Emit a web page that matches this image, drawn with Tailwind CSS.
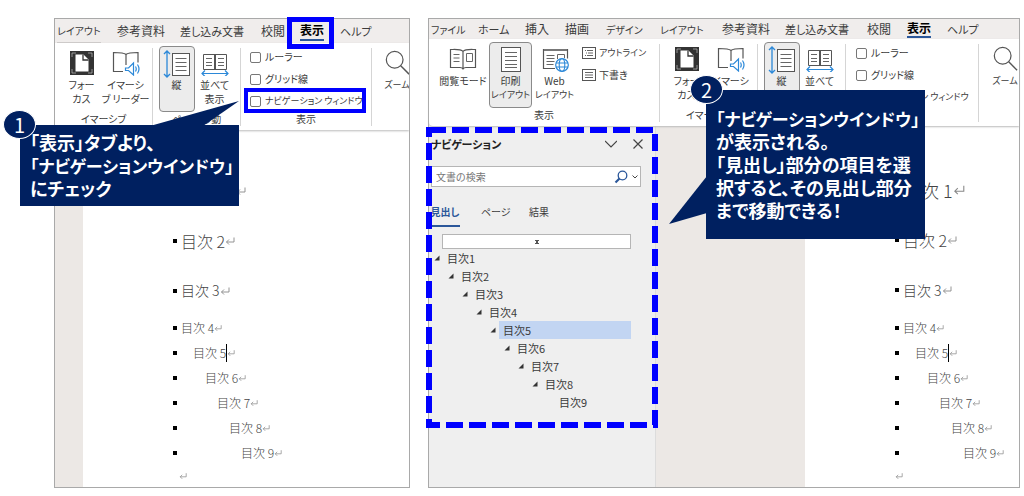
<!DOCTYPE html>
<html lang="ja">
<head>
<meta charset="utf-8">
<meta name="viewport" content="width=device-width, initial-scale=1">
<title>ナビゲーションウインドウの表示</title>
<script src="https://cdn.jsdelivr.net/npm/@tailwindcss/browser@4"></script>
</head>
<body class="bg-white font-['Noto_Sans_CJK_JP',sans-serif] [font-feature-settings:'palt'] text-[#3b3b3b]">

<svg class="hidden" aria-hidden="true">
  <symbol id="i-focus" viewBox="0 0 26 26">
    <rect x="1" y="1" width="24" height="24" fill="#333"/>
    <path d="M3 7V3h4M19 3h4v4M23 19v4h-4M7 23H3v-4" fill="none" stroke="#bbb" stroke-width=".7"/>
    <path d="M6.500 4.500h8l5 5v12h-13z" fill="#fff"/>
    <path d="M14 4.500v5.500h5.500" fill="none" stroke="#333" stroke-width="1.300"/>
  </symbol>
  <symbol id="i-immersive" viewBox="0 0 28 26">
    <path d="M14 4.500C12 2.500 8 2.500 1.500 2.500v19h9.500M14 4.500c2-2 6-2 12-2v10M14 4.500V15" fill="none" stroke="#555" stroke-width="1.200"/>
    <path d="M13.500 18h3l5-5v12l-5-4.500h-3z" fill="#fff" stroke="#2b88d8" stroke-width="1.200"/>
    <path d="M23.500 16.500q1.500 2.500 0 5M25.500 14.500q3 4.500 0 9" fill="none" stroke="#2b88d8" stroke-width="1.200"/>
  </symbol>
  <symbol id="i-vertical" viewBox="0 0 28 28">
    <path d="M4 1v26M1 4l3-3 3 3M1 24l3 3 3-3" fill="none" stroke="#2b88d8" stroke-width="1.300"/>
    <rect x="9.500" y="3.500" width="17" height="22" fill="#fff" stroke="#555"/>
    <path d="M12.500 8.500h11M12.500 12.500h11M12.500 16.500h11M12.500 20.500h11" stroke="#666"/>
  </symbol>
  <symbol id="i-side" viewBox="0 0 28 26">
    <path d="M2.500 4.500h23v15h-23zM13.500 4.500v15M14.500 4.500v15" fill="none" stroke="#555"/>
    <path d="M5 8.500h6M5 12.500h6M5 15.500h6M17 8.500h6M17 12.500h6M17 15.500h6" stroke="#666"/>
    <path d="M1 23.500h26M4 20.500l-3 3 3 3M24 20.500l3 3-3 3" fill="none" stroke="#2b88d8" stroke-width="1.200"/>
  </symbol>
  <symbol id="i-read" viewBox="0 0 28 26">
    <path d="M14 5.500C12 3 8 3.500 1.500 3.500v18h9.500q2 0 3 1.500 1-1.500 3-1.500h9.500v-18C20 3.500 16 3 14 5.500zM14 5.500V23" fill="none" stroke="#555" stroke-width="1.200"/>
    <path d="M4.500 8.500h6M4.500 12h6M4.500 15.500h6M17.500 7.500h6v8h-6z" fill="none" stroke="#666"/>
  </symbol>
  <symbol id="i-print" viewBox="0 0 26 26">
    <rect x="3.500" y="1.500" width="19" height="24" fill="#fff" stroke="#555"/>
    <path d="M7 6.500h12M7 10.500h12M7 14.500h12M7 18.500h12M7 21.500h12" stroke="#666"/>
  </symbol>
  <symbol id="i-web" viewBox="0 0 28 26">
    <path d="M14 22.500H2.500v-19h24v9" fill="none" stroke="#555" stroke-width="1.200"/>
    <path d="M3 4h23" stroke="#777" stroke-width="2"/>
    <path d="M5.500 9.500h8M5.500 12.500h8M5.500 15.500h8M5.500 18.500h7M16.500 13V8.500h7V12" fill="none" stroke="#666"/>
    <circle cx="21" cy="19" r="6.300" fill="#fff" stroke="#2b88d8" stroke-width="1.200"/>
    <ellipse cx="21" cy="19" rx="2.800" ry="6.300" fill="none" stroke="#2b88d8" stroke-width="1.100"/>
    <path d="M15 17h12M15 21h12" stroke="#2b88d8" stroke-width="1.100"/>
  </symbol>
  <symbol id="i-outline" viewBox="0 0 16 14">
    <rect x="1.500" y="1.500" width="13" height="11" fill="none" stroke="#555"/>
    <path d="M4 4.500h1M6 4.500h6M5 7h1M7 7h5M4 9.500h1M6 9.500h6" stroke="#666"/>
  </symbol>
  <symbol id="i-draft" viewBox="0 0 16 14">
    <rect x="1.500" y="1.500" width="13" height="11" fill="none" stroke="#555"/>
    <path d="M4 4.500h8M4 7h8M4 9.500h8" stroke="#666"/>
  </symbol>
  <symbol id="i-zoom" viewBox="0 0 28 28">
    <circle cx="11.500" cy="10.500" r="9" fill="none" stroke="#555" stroke-width="1.300"/>
    <path d="M18 17l9 9" stroke="#555" stroke-width="1.500"/>
  </symbol>
  <symbol id="i-return" viewBox="0 0 10 8">
    <path d="M9 .5v4.500H1.500M4 2.500L1.500 5 4 7.500" fill="none" stroke="#888" stroke-width=".9"/>
  </symbol>
  <symbol id="i-node" viewBox="0 0 6 6"><path d="M5.500 .5v5H.5z" fill="#333"/></symbol>
</svg>

<main class="relative grid grid-cols-[356fr_592fr] gap-[18px] pt-[18px] pr-1 pb-2 pl-[54px]">

  <!-- Window with the navigation pane closed -->
  <section class="flex min-w-0 flex-col overflow-hidden border border-[#a9a9a9]">
    <nav class="flex h-6 items-center bg-[#f0edec] pl-[2px] text-[12px] whitespace-nowrap">
      <button class="mr-4 h-full w-[44px] border-b border-[#cfcccb] text-left text-[10px]">レイアウト</button>
      <button class="w-[63px] text-left">参考資料</button>
      <button class="w-[81px] text-left text-[11px]">差し込み文書</button>
      <button class="w-[39px] text-left">校閲</button>
      <button class="mr-4 border-b-2 border-[#2b579a] font-bold leading-[18px] text-black">表示</button>
      <button class="text-[11px]">ヘルプ</button>
    </nav>
    <div class="relative z-10 flex bg-white pt-[3px] pb-[2px] text-[10px] leading-[14px] whitespace-nowrap shadow-[0_1px_2px_#bbb]">
      <div class="my-[2px] flex w-[98px] shrink-0 flex-col items-center border-r border-[#d5d5d5]">
        <div class="-mt-[2px] flex h-[66px] pt-1">
          <button class="flex w-[44px] flex-col items-center gap-[2px]"><svg class="h-[26px] w-[26px]"><use href="#i-focus"/></svg><span>フォー<br>カス</span></button>
          <button class="flex w-[44px] flex-col items-center gap-[2px]"><svg class="h-[26px] w-7"><use href="#i-immersive"/></svg><span>イマーシ<br>ブ リーダー</span></button>
        </div>
        <span>イマーシブ</span>
      </div>
      <div class="my-[2px] flex w-[88px] shrink-0 flex-col items-center border-r border-[#d5d5d5]">
        <div class="-mt-[2px] flex h-[66px]">
          <button class="flex w-9 flex-col items-center rounded border border-[#8a8a8a] bg-[#ececec] pt-[3px]"><svg class="h-7 w-7"><use href="#i-vertical"/></svg><span>縦</span></button>
          <button class="flex w-10 flex-col items-center gap-[2px] pt-1"><svg class="h-[26px] w-7"><use href="#i-side"/></svg><span>並べて<br>表示</span></button>
        </div>
        <span>ページ移動</span>
      </div>
      <div class="my-[2px] flex w-[131px] shrink-0 flex-col items-center border-r border-[#d5d5d5]">
        <div class="-mt-[2px] flex h-[66px] w-full flex-col pl-[9px]">
          <label class="flex h-[22px] items-center gap-1"><input type="checkbox" class="h-[11px] w-[11px] shrink-0 appearance-none rounded-[2px] border border-[#777] bg-white">ルーラー</label>
          <label class="flex h-[22px] items-center gap-1"><input type="checkbox" class="h-[11px] w-[11px] shrink-0 appearance-none rounded-[2px] border border-[#777] bg-white">グリッド線</label>
          <label class="flex h-[22px] items-center gap-1 text-[9px]"><input type="checkbox" class="h-[11px] w-[11px] shrink-0 appearance-none rounded-[2px] border border-[#777] bg-white">ナビゲーション ウィンドウ</label>
        </div>
        <span>表示</span>
      </div>
      <button class="ml-[11px] flex w-7 shrink-0 flex-col items-center gap-[2px] self-start pt-1"><svg class="h-[26px] w-[26px]"><use href="#i-zoom"/></svg><span class="text-[9px]">ズーム</span></button>
    </div>
    <div class="flex flex-1">
      <div class="w-7 bg-[#ece8e5]"></div>
      <article class="flex-1 bg-white pt-[36px] pl-[90px] font-light text-[#444]">
        <h2 class="flex h-[50px] items-center gap-1 text-[20px]"><i class="h-1 w-1 bg-black"></i><span>目次 1</span><svg class="-ml-1 h-2 w-[10px]"><use href="#i-return"/></svg></h2>
        <h3 class="flex h-[50px] items-center gap-1 text-[16px]"><i class="h-1 w-1 bg-black"></i><span>目次 2</span><svg class="-ml-1 h-2 w-[10px]"><use href="#i-return"/></svg></h3>
        <h4 class="flex h-[49px] items-center gap-1 text-[14px]"><i class="h-1 w-1 bg-black"></i><span>目次 3</span><svg class="-ml-1 h-2 w-[10px]"><use href="#i-return"/></svg></h4>
        <p class="flex h-[25px] items-center gap-1 text-[12px]"><i class="h-1 w-1 bg-black"></i><span>目次 4</span><svg class="-ml-1 h-2 w-[8px]"><use href="#i-return"/></svg></p>
        <p class="flex h-[25px] items-center gap-1 text-[12px]"><i class="h-1 w-1 bg-black"></i><span class="ml-[12px] border-r border-black">目次 5</span><svg class="-ml-1 h-2 w-[8px]"><use href="#i-return"/></svg></p>
        <p class="flex h-[25px] items-center gap-1 text-[12px]"><i class="h-1 w-1 bg-black"></i><span class="ml-[24px]">目次 6</span><svg class="-ml-1 h-2 w-[8px]"><use href="#i-return"/></svg></p>
        <p class="flex h-[25px] items-center gap-1 text-[12px]"><i class="h-1 w-1 bg-black"></i><span class="ml-[36px]">目次 7</span><svg class="-ml-1 h-2 w-[8px]"><use href="#i-return"/></svg></p>
        <p class="flex h-[25px] items-center gap-1 text-[12px]"><i class="h-1 w-1 bg-black"></i><span class="ml-[48px]">目次 8</span><svg class="-ml-1 h-2 w-[8px]"><use href="#i-return"/></svg></p>
        <p class="flex h-[25px] items-center gap-1 text-[12px]"><i class="h-1 w-1 bg-black"></i><span class="ml-[60px]">目次 9</span><svg class="-ml-1 h-2 w-[8px]"><use href="#i-return"/></svg></p>
        <p class="flex h-[22px] items-center pl-[6px]"><svg class="h-2 w-[8px]"><use href="#i-return"/></svg></p>
      </article>
    </div>
  </section>

  <!-- Window with the navigation pane open -->
  <section class="flex min-w-0 flex-col border border-[#a9a9a9]">
    <nav class="flex h-5 items-center bg-[#f0edec] pl-[2px] text-[12px] whitespace-nowrap">
      <button class="w-[47px] text-left text-[10px]">ファイル</button>
      <button class="w-[47px] text-left text-[11px]">ホーム</button>
      <button class="w-10 text-left">挿入</button>
      <button class="w-[41px] text-left">描画</button>
      <button class="w-[54px] text-left text-[10px]">デザイン</button>
      <button class="w-[62px] text-left text-[10px]">レイアウト</button>
      <button class="w-[63px] text-left">参考資料</button>
      <button class="w-[82px] text-left text-[11px]">差し込み文書</button>
      <button class="w-10 text-left">校閲</button>
      <button class="mr-4 border-b-2 border-[#2b579a] font-bold leading-[16px] text-black">表示</button>
      <button class="text-[11px]">ヘルプ</button>
    </nav>
    <div class="relative z-10 flex overflow-hidden rounded-bl bg-white pt-[3px] pb-[2px] text-[10px] leading-[14px] whitespace-nowrap shadow-[0_1px_2px_#bbb]">
      <div class="my-[2px] flex w-[231px] shrink-0 flex-col items-center border-r border-[#d5d5d5]">
        <div class="-mt-[2px] flex h-[66px] w-full pl-2">
          <button class="flex w-[52px] flex-col items-center gap-[2px] pt-1"><svg class="h-[26px] w-7"><use href="#i-read"/></svg><span>閲覧モード</span></button>
          <button class="flex w-[43px] flex-col items-center gap-[2px] rounded border border-[#8a8a8a] bg-[#ececec] pt-[3px]"><svg class="h-[26px] w-[26px]"><use href="#i-print"/></svg><span>印刷</span><span class="-mt-[2px] text-[9px]">レイアウト</span></button>
          <button class="flex w-[45px] flex-col items-center gap-[2px] pt-1"><svg class="h-[26px] w-7"><use href="#i-web"/></svg><span>Web</span><span class="-mt-[2px] text-[9px]">レイアウト</span></button>
          <div class="flex flex-col pl-1">
            <button class="flex h-[22px] items-center gap-[2px] text-[9px]"><svg class="h-[14px] w-4"><use href="#i-outline"/></svg>アウトライン</button>
            <button class="flex h-[22px] items-center gap-[2px]"><svg class="h-[14px] w-4"><use href="#i-draft"/></svg>下書き</button>
          </div>
        </div>
        <span>表示</span>
      </div>
      <div class="my-[2px] flex w-[98px] shrink-0 flex-col items-center border-r border-[#d5d5d5]">
        <div class="-mt-[2px] flex h-[66px] pt-1">
          <button class="flex w-[44px] flex-col items-center gap-[2px]"><svg class="h-[26px] w-[26px]"><use href="#i-focus"/></svg><span>フォー<br>カス</span></button>
          <button class="flex w-[44px] flex-col items-center gap-[2px]"><svg class="h-[26px] w-7"><use href="#i-immersive"/></svg><span>イマーシ</span></button>
        </div>
        <span>イマーシブ</span>
      </div>
      <div class="my-[2px] flex w-[88px] shrink-0 flex-col items-center border-r border-[#d5d5d5]">
        <div class="-mt-[2px] flex h-[66px]">
          <button class="flex w-9 flex-col items-center rounded border border-[#8a8a8a] bg-[#ececec] pt-[3px]"><svg class="h-7 w-7"><use href="#i-vertical"/></svg><span>縦</span></button>
          <button class="flex w-10 flex-col items-center gap-[2px] pt-1"><svg class="h-[26px] w-7"><use href="#i-side"/></svg><span>並べて</span></button>
        </div>
      </div>
      <div class="my-[2px] flex w-[133px] shrink-0 flex-col items-center border-r border-[#d5d5d5]">
        <div class="-mt-[2px] flex h-[66px] w-full flex-col pl-[10px]">
          <label class="flex h-[22px] items-center gap-1"><input type="checkbox" class="h-[11px] w-[11px] shrink-0 appearance-none rounded-[2px] border border-[#777] bg-white">ルーラー</label>
          <label class="flex h-[22px] items-center gap-1"><input type="checkbox" class="h-[11px] w-[11px] shrink-0 appearance-none rounded-[2px] border border-[#777] bg-white">グリッド線</label>
          <label class="flex h-[22px] items-center gap-1 text-[9px]"><input type="checkbox" checked class="h-[11px] w-[11px] shrink-0 appearance-none rounded-[2px] border border-[#777] bg-white">ナビゲーション ウィンドウ</label>
        </div>
      </div>
      <button class="ml-3 flex w-7 shrink-0 flex-col items-center gap-[2px] self-start pt-1"><svg class="h-[26px] w-[26px]"><use href="#i-zoom"/></svg><span class="text-[9px]">ズーム</span></button>
    </div>
    <div class="flex flex-1">
      <aside class="relative w-[227px] border-r border-[#dcdcdc] bg-[#efefef] pt-2 text-[11px]">
        <header class="flex h-5 items-center pr-3 pl-[2px]">
          <h2 class="flex-1 text-[11px] font-bold text-[#222]">ナビゲーション</h2>
          <button aria-label="オプション" class="mr-4"><svg class="h-3 w-3" viewBox="0 0 12 12"><path d="M0 3l6 6 6-6" fill="none" stroke="#444" stroke-width="1.200"/></svg></button>
          <button aria-label="閉じる"><svg class="h-[10px] w-[10px]" viewBox="0 0 10 10"><path d="M.5 .5l9 9M9.500 .5l-9 9" stroke="#444" stroke-width="1.200"/></svg></button>
        </header>
        <div class="mt-3 mr-[14px] ml-[2px] flex h-[21px] items-center border border-[#b5b5b5] bg-white pr-[2px]">
          <input type="text" aria-label="文書の検索" placeholder="文書の検索" class="min-w-0 flex-1 pl-1 text-[10px] outline-none placeholder:text-[#777]">
          <button aria-label="検索" class="flex items-center gap-1"><svg class="h-[14px] w-[14px]" viewBox="0 0 14 14"><circle cx="8.500" cy="5.500" r="4.300" fill="none" stroke="#2b579a" stroke-width="1.300"/><path d="M5.500 8.500l-4 4" stroke="#2b579a" stroke-width="2.200"/></svg><svg class="h-[6px] w-[6px]" viewBox="0 0 6 6"><path d="M.5 1.500L3 4l2.500-2.500" fill="none" stroke="#444"/></svg></button>
        </div>
        <div class="mt-4 flex h-[24px] items-start pl-[1px] whitespace-nowrap">
          <button class="mr-[21px] flex h-full w-[30px] justify-center border-b-2 border-[#2b579a] text-[10px] leading-[18px] font-bold text-[#2b579a]">見出し</button>
          <button class="w-12 text-left text-[10px] leading-[18px]">ページ</button>
          <button class="text-[10px] leading-[18px]">結果</button>
        </div>
        <button aria-label="先頭へ移動" class="mt-[7px] mr-6 ml-[13px] flex h-[15px] w-[189px] items-center justify-center border border-[#b5b5b5] bg-white"><svg class="h-1 w-1" viewBox="0 0 4 4"><path d="M0 0h4v1H3v2h1v1H0V3h1V1H0z" fill="#555"/></svg></button>
        <ul class="leading-[18px]">
          <li class="flex h-[18px] items-center gap-[7px] pl-[5px]"><svg class="h-[6px] w-[6px]"><use href="#i-node"/></svg>目次1</li>
          <li class="flex h-[18px] items-center gap-[7px] pl-[19px]"><svg class="h-[6px] w-[6px]"><use href="#i-node"/></svg>目次2</li>
          <li class="flex h-[18px] items-center gap-[7px] pl-[33px]"><svg class="h-[6px] w-[6px]"><use href="#i-node"/></svg>目次3</li>
          <li class="flex h-[18px] items-center gap-[7px] pl-[47px]"><svg class="h-[6px] w-[6px]"><use href="#i-node"/></svg>目次4</li>
          <li class="flex h-[18px] items-center gap-[3px] pr-6 pl-[61px]"><svg class="h-[6px] w-[6px]"><use href="#i-node"/></svg><span class="flex-1 bg-[#c2d5f2] pl-1">目次5</span></li>
          <li class="flex h-[18px] items-center gap-[7px] pl-[75px]"><svg class="h-[6px] w-[6px]"><use href="#i-node"/></svg>目次6</li>
          <li class="flex h-[18px] items-center gap-[7px] pl-[89px]"><svg class="h-[6px] w-[6px]"><use href="#i-node"/></svg>目次7</li>
          <li class="flex h-[18px] items-center gap-[7px] pl-[103px]"><svg class="h-[6px] w-[6px]"><use href="#i-node"/></svg>目次8</li>
          <li class="flex h-[18px] items-center pl-[130px]">目次9</li>
        </ul>
        <svg class="pointer-events-none absolute -top-px -left-[3px] z-20 h-[304px] w-[234px]" viewBox="0 0 234 304" aria-hidden="true"><rect x="3" y="5" width="226" height="295" fill="none" stroke="#0000ff" stroke-width="6" stroke-dasharray="17 6"/></svg>
      </aside>
      <div class="w-[149px] bg-[#ece8e5]"></div>
      <article class="flex-1 bg-white pt-[39px] pl-[90px] font-light text-[#444]">
        <h2 class="flex h-[50px] items-center gap-1 text-[18px]"><i class="h-1 w-1 bg-black"></i><span>目次 1</span><svg class="-ml-1 h-[10px] w-3"><use href="#i-return"/></svg></h2>
        <h3 class="flex h-[50px] items-center gap-1 text-[16px]"><i class="h-1 w-1 bg-black"></i><span>目次 2</span><svg class="-ml-1 h-2 w-[10px]"><use href="#i-return"/></svg></h3>
        <h4 class="flex h-[50px] items-center gap-1 text-[14px]"><i class="h-1 w-1 bg-black"></i><span>目次 3</span><svg class="-ml-1 h-2 w-[10px]"><use href="#i-return"/></svg></h4>
        <p class="flex h-[25px] items-center gap-1 text-[12px]"><i class="h-1 w-1 bg-black"></i><span>目次 4</span><svg class="-ml-1 h-2 w-[8px]"><use href="#i-return"/></svg></p>
        <p class="flex h-[25px] items-center gap-1 text-[12px]"><i class="h-1 w-1 bg-black"></i><span class="ml-[12px] border-r border-black">目次 5</span><svg class="-ml-1 h-2 w-[8px]"><use href="#i-return"/></svg></p>
        <p class="flex h-[25px] items-center gap-1 text-[12px]"><i class="h-1 w-1 bg-black"></i><span class="ml-[24px]">目次 6</span><svg class="-ml-1 h-2 w-[8px]"><use href="#i-return"/></svg></p>
        <p class="flex h-[25px] items-center gap-1 text-[12px]"><i class="h-1 w-1 bg-black"></i><span class="ml-[36px]">目次 7</span><svg class="-ml-1 h-2 w-[8px]"><use href="#i-return"/></svg></p>
        <p class="flex h-[25px] items-center gap-1 text-[12px]"><i class="h-1 w-1 bg-black"></i><span class="ml-[48px]">目次 8</span><svg class="-ml-1 h-2 w-[8px]"><use href="#i-return"/></svg></p>
        <p class="flex h-[25px] items-center gap-1 text-[12px]"><i class="h-1 w-1 bg-black"></i><span class="ml-[60px]">目次 9</span><svg class="-ml-1 h-2 w-[8px]"><use href="#i-return"/></svg></p>
        <p class="flex h-[22px] items-center"><svg class="h-2 w-[8px]"><use href="#i-return"/></svg></p>
      </article>
    </div>
  </section>

  <!-- Highlight frames -->
  <div class="absolute top-[17px] left-[287px] z-20 h-[32px] w-[47px] border-[5px] border-[#0000ff]"></div>
  <div class="absolute top-[88px] left-[244px] z-20 h-[25px] w-[122px] border-4 border-[#0000ff]"></div>

  <!-- Callout 1 -->
  <svg class="absolute top-[101px] left-[150px] z-30 h-[25px] w-[89px]" viewBox="0 0 89 25" aria-hidden="true"><path d="M0 25L89 0 53 25z" fill="#002060"/></svg>
  <div class="absolute top-[125px] left-5 z-30 w-[219px] bg-[#002060] pt-[6px] pb-[6px] pl-[10px] text-[18px] leading-[23px] font-bold whitespace-nowrap text-white"><p>「表示」タブより、</p><p class="text-[17px]">「ナビゲーションウインドウ」</p><p>にチェック</p></div>
  <div class="absolute top-[110px] left-[3px] z-40 flex h-[29px] w-[33px] items-center justify-center rounded-[50%] border border-white bg-[#002060] text-[20px] text-white">1</div>

  <!-- Callout 2 -->
  <svg class="absolute top-[176px] left-[669px] z-30 h-12 w-[38px]" viewBox="0 0 38 48" aria-hidden="true"><path d="M38 0L0 48 38 37z" fill="#002060"/></svg>
  <div class="absolute top-[90px] left-[706px] z-30 w-[219px] bg-[#002060] pt-[17px] pb-[17px] pl-[10px] text-[18px] leading-[23px] font-bold whitespace-nowrap text-white"><p class="text-[17px]">「ナビゲーションウインドウ」</p><p>が表示される。</p><p>「見出し」部分の項目を選</p><p>択すると、その見出し部分</p><p>まで移動できる！</p></div>
  <div class="absolute top-[75px] left-[690px] z-40 flex h-[29px] w-[33px] items-center justify-center rounded-[50%] border border-white bg-[#002060] text-[20px] text-white">2</div>
</main>
</body>
</html>
